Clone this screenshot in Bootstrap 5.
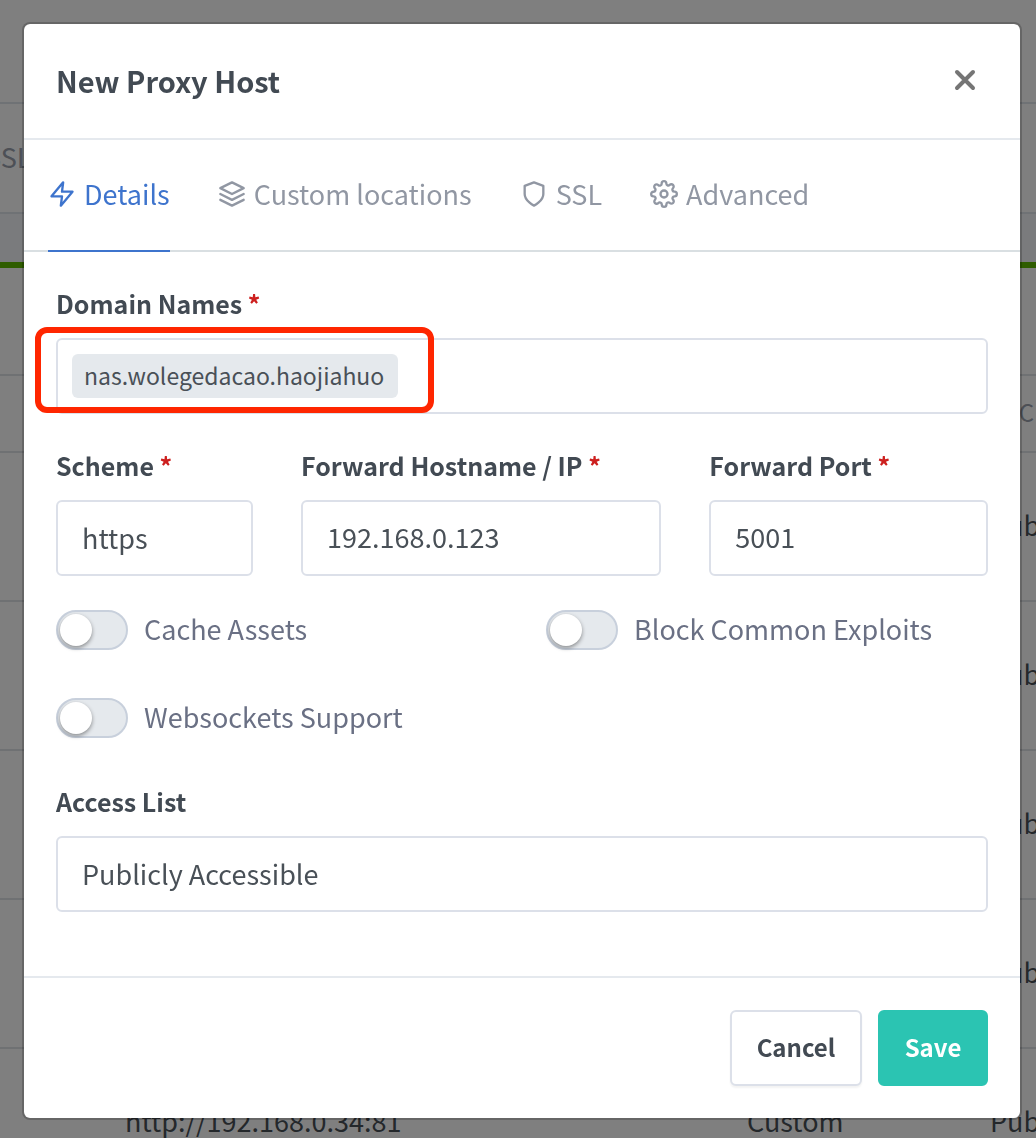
<!DOCTYPE html>
<html lang="en">
<head>
<meta charset="utf-8">
<meta name="viewport" content="width=device-width, initial-scale=1">
<title>New Proxy Host</title>
<link href="https://cdn.jsdelivr.net/npm/bootstrap@5.3.0/dist/css/bootstrap.min.css" rel="stylesheet">
<style>
  body { font-family: "Noto Sans CJK SC", "Noto Sans", sans-serif; font-size: 27px; line-height: 42px; color: #495057; background: #fff; height: 100vh; overflow: hidden; }

  /* page behind the dialog */
  .page-behind { height: 100vh; overflow: hidden; }
  .top-bar { height: 104px; border-bottom: 2px solid #dfe4ea; }
  .menu-bar { height: 110px; padding-bottom: 2px; border-bottom: 2px solid #dfe4ea; }
  .menu-bar a { color: #9aa0ac; margin-left: -15px; }
  .page-band { height: 48px; background: #f5f7fb; }
  .host-card { border-top: 6px solid #5eba00; }
  .card-top { height: 108px; border-bottom: 2px solid #dee2e6; }
  .host-table { width: 1300px; table-layout: fixed; margin: 0; color: #495057; }
  .host-table > :not(caption) > * > * { padding: 0 0 4px; vertical-align: middle; border-bottom: 2px solid #dee2e6; color: inherit; }
  .host-table > thead > tr > th { height: 76px; font-size: 24px; font-weight: 400; color: #9aa0ac; text-transform: uppercase; }
  .host-table td { height: 149px; }
  .host-table .c-lead { width: 125px; }
  .host-table .c-dest { width: 622px; }
  .host-table .c-ssl { width: 243px; }

  /* dialog */
  .modal-backdrop.show { opacity: .5; }
  .modal { padding-left: 8px; }
  .modal-dialog { max-width: 1000px; margin: 22px auto; }
  .modal-content { border: 2px solid rgba(0,0,0,.2); border-radius: 8px; color: inherit; }
  .modal-header { height: 116px; padding: 0 40px 2px 32px; border-bottom: 2px solid #e5e9ee; border-radius: 0; }
  .modal-title { font-size: 29px; font-weight: 700; line-height: 42px; color: #424a53; }
  .close-x { border: 0; background: none; padding: 0; width: 30px; height: 30px; color: #757575; display: flex; }
  .host-tabs { height: 112px; padding: 0 24px; gap: 48px; border-bottom: 2px solid #d9dfe2; flex-wrap: nowrap; }
  .host-tabs .nav-link { display: flex; align-items: center; gap: 8px; height: 112px; margin: 0; padding: 0; border: 0; border-bottom: 2px solid transparent; border-radius: 0; color: #9197a3; white-space: nowrap; }
  .host-tabs .nav-link span { padding-bottom: 3px; }
  .host-tabs .nav-link.active { color: #3e74cd; background: none; border-bottom-color: #3e74cd; }
  .feather { width: 28px; height: 28px; margin-bottom: 2px; fill: none; stroke: currentColor; stroke-width: 2; stroke-linecap: round; stroke-linejoin: round; flex: none; }
  .modal-body { padding: 32px; }
  .fields { --bs-gutter-x: 48px; }
  .field { margin-bottom: 32px; }
  .form-label { display: block; margin-bottom: 16px; font-size: 25px; line-height: 38px; font-weight: 700; color: #424a53; }
  .req { color: #cd201f; }
  .form-control, .form-select { height: 76px; padding: 0 24px; border: 2px solid #dce0e9; border-radius: 6px; font-size: 27px; line-height: 42px; color: #495057; background: #fff; }
  input.form-control { padding-bottom: 4px; }
  .tag-box { display: flex; align-items: center; padding: 0 14px; gap: 8px; }
  .tag-item { height: 44px; padding: 0 14px 0 12px; border-radius: 6px; background: #e5e9ed; font-size: 23px; line-height: 42px; }
  .tag-entry { border: 0; outline: 0; flex: 1; min-width: 0; background: none; }
  .marker { position: absolute; left: -21px; top: -11px; width: 399px; height: 86px; border: 6px solid #ff2600; border-radius: 12px; pointer-events: none; }
  .switches { row-gap: 44px; margin-bottom: 42px; }
  .form-switch { display: flex; align-items: center; gap: 16px; min-height: 44px; margin: 0; padding: 0; }
  .form-switch .form-check-input { width: 72px; height: 40px; margin: 0; padding: 2px; float: none; flex: none; border: 2px solid #c8d0dc; border-radius: 20px; background: #e5e9ed; }
  .form-switch .form-check-input::before { content: ""; display: block; width: 32px; height: 32px; border-radius: 50%; background: #fff; box-shadow: 0 2px 4px rgba(0,0,0,.4); }
  .form-switch .form-check-input:checked { background: #3e74cd; }
  .form-switch .form-check-input:checked::before { margin-left: 32px; }
  .form-check-label { padding-bottom: 2px; color: #6a7084; }
  .modal-footer { padding: 32px; gap: 16px; border-top: 2px solid #e5e9ee; }
  .modal-footer > * { margin: 0; }
  .modal-footer .btn { height: 76px; padding: 0 22px 3px; border-width: 2px; border-radius: 6px; font-size: 24px; font-weight: 700; line-height: 42px; }
  .btn-cancel { min-width: 132px; color: #424a53; border-color: #dce0e9; background: #fff; box-shadow: 0 2px 2px rgba(0,0,0,.05); }
  .btn-save, .btn-save:hover { min-width: 110px; color: #fff; border-color: #2bc4b2; background: #2bc4b2; }
</style>
</head>
<body>

<div class="page-behind" aria-hidden="true">
  <div class="top-bar"></div>
  <nav class="menu-bar d-flex align-items-center"><a class="text-decoration-none" href="#" tabindex="-1">SSL</a></nav>
  <div class="page-band"></div>
  <div class="host-card">
    <div class="card-top"></div>
    <table class="table host-table">
      <colgroup><col class="c-lead"><col class="c-dest"><col class="c-ssl"><col></colgroup>
      <thead><tr><th></th><th></th><th></th><th>Access</th></tr></thead>
      <tbody>
        <tr><td></td><td></td><td></td><td>Public</td></tr>
        <tr><td></td><td></td><td></td><td>Public</td></tr>
        <tr><td></td><td></td><td></td><td>Public</td></tr>
        <tr><td></td><td></td><td></td><td>Public</td></tr>
        <tr><td></td><td>http://192.168.0.34:81</td><td>Custom</td><td>Public</td></tr>
      </tbody>
    </table>
  </div>
</div>

<div class="modal-backdrop show"></div>

<div class="modal show d-block" tabindex="-1" role="dialog" aria-modal="true" aria-labelledby="dialogTitle">
  <div class="modal-dialog">
    <form class="modal-content">
      <div class="modal-header">
        <h5 class="modal-title" id="dialogTitle">New Proxy Host</h5>
        <button type="button" class="close-x" aria-label="Close">
          <svg viewBox="0 0 30 30" width="30" height="30" fill="none" stroke="currentColor" stroke-width="4" stroke-linecap="round"><path d="M7 7l16 16M23 7L7 23"/></svg>
        </button>
      </div>

      <nav class="nav nav-tabs host-tabs">
        <a class="nav-link active" href="#details"><svg class="feather" viewBox="0 0 24 24"><path d="M13 2L3 14h9l-1 8 10-12h-9l1-8z"/></svg><span>Details</span></a>
        <a class="nav-link" href="#locations"><svg class="feather" viewBox="0 0 24 24"><path d="M12 2L2 7l10 5 10-5-10-5zM2 17l10 5 10-5M2 12l10 5 10-5"/></svg><span>Custom locations</span></a>
        <a class="nav-link" href="#ssl"><svg class="feather" viewBox="0 0 24 24"><path d="M12 22s8-4 8-10V5l-8-3-8 3v7c0 6 8 10 8 10z"/></svg><span>SSL</span></a>
        <a class="nav-link" href="#advanced"><svg class="feather" viewBox="0 0 24 24"><circle cx="12" cy="12" r="3"/><path d="M19.4 15a1.65 1.65 0 0 0 .33 1.82l.06.06a2 2 0 0 1 0 2.83 2 2 0 0 1-2.83 0l-.06-.06a1.65 1.65 0 0 0-1.82-.33 1.65 1.65 0 0 0-1 1.51V21a2 2 0 0 1-2 2 2 2 0 0 1-2-2v-.09A1.65 1.65 0 0 0 9 19.4a1.65 1.65 0 0 0-1.82.33l-.06.06a2 2 0 0 1-2.83 0 2 2 0 0 1 0-2.83l.06-.06a1.65 1.65 0 0 0 .33-1.82 1.65 1.65 0 0 0-1.51-1H3a2 2 0 0 1-2-2 2 2 0 0 1 2-2h.09A1.65 1.65 0 0 0 4.6 9a1.65 1.65 0 0 0-.33-1.82l-.06-.06a2 2 0 0 1 0-2.83 2 2 0 0 1 2.83 0l.06.06a1.65 1.65 0 0 0 1.82.33H9a1.65 1.65 0 0 0 1-1.51V3a2 2 0 0 1 2-2 2 2 0 0 1 2 2v.09a1.65 1.65 0 0 0 1 1.51 1.65 1.65 0 0 0 1.82-.33l.06-.06a2 2 0 0 1 2.83 0 2 2 0 0 1 0 2.83l-.06.06a1.65 1.65 0 0 0-.33 1.82V9a1.65 1.65 0 0 0 1.51 1H21a2 2 0 0 1 2 2 2 2 0 0 1-2 2h-.09a1.65 1.65 0 0 0-1.51 1z"/></svg><span>Advanced</span></a>
      </nav>

      <div class="modal-body">
        <div class="field">
          <label class="form-label" for="domains">Domain Names <span class="req">*</span></label>
          <div class="position-relative">
            <div class="form-control tag-box">
              <span class="tag-item">nas.wolegedacao.haojiahuo</span>
              <input class="tag-entry" type="text" id="domains">
            </div>
            <div class="marker"></div>
          </div>
        </div>

        <div class="row fields">
          <div class="col-md-3 field">
            <label class="form-label" for="scheme">Scheme <span class="req">*</span></label>
            <select class="form-select" id="scheme"><option>https</option><option>http</option></select>
          </div>
          <div class="col-md-5 field">
            <label class="form-label" for="host">Forward Hostname / IP <span class="req">*</span></label>
            <input class="form-control" type="text" id="host" value="192.168.0.123">
          </div>
          <div class="col-md-4 field">
            <label class="form-label" for="port">Forward Port <span class="req">*</span></label>
            <input class="form-control" type="text" id="port" value="5001">
          </div>
        </div>

        <div class="row fields switches">
          <div class="col-md-6">
            <div class="form-check form-switch">
              <input class="form-check-input" type="checkbox" role="switch" id="cache">
              <label class="form-check-label" for="cache">Cache Assets</label>
            </div>
          </div>
          <div class="col-md-6">
            <div class="form-check form-switch">
              <input class="form-check-input" type="checkbox" role="switch" id="exploits">
              <label class="form-check-label" for="exploits">Block Common Exploits</label>
            </div>
          </div>
          <div class="col-md-12">
            <div class="form-check form-switch">
              <input class="form-check-input" type="checkbox" role="switch" id="websockets">
              <label class="form-check-label" for="websockets">Websockets Support</label>
            </div>
          </div>
        </div>

        <div class="field">
          <label class="form-label" for="access">Access List</label>
          <select class="form-select" id="access"><option>Publicly Accessible</option></select>
        </div>
      </div>

      <div class="modal-footer">
        <button type="button" class="btn btn-cancel">Cancel</button>
        <button type="button" class="btn btn-save">Save</button>
      </div>
    </form>
  </div>
</div>

<script src="https://cdn.jsdelivr.net/npm/bootstrap@5.3.0/dist/js/bootstrap.bundle.min.js"></script>
</body>
</html>
